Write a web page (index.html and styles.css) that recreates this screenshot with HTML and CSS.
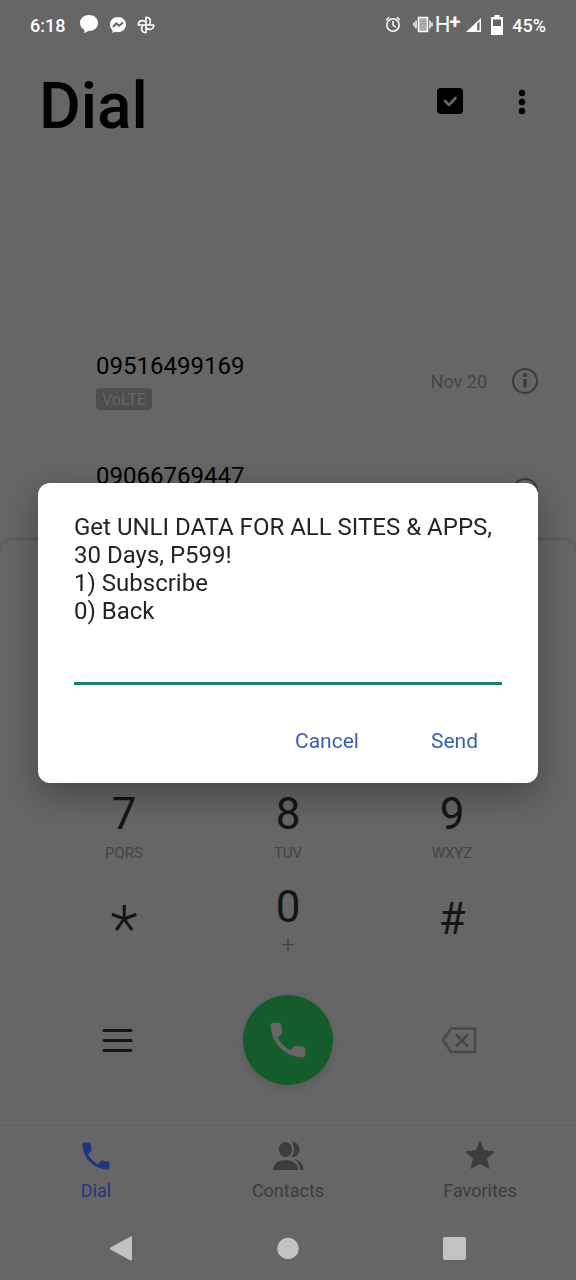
FILE: index.html
```html
<!DOCTYPE html>
<html lang="en">
<head>
<meta charset="utf-8">
<meta name="viewport" content="width=device-width, initial-scale=1">
<title>Dial</title>
<link rel="stylesheet" href="styles.css">
</head>
<body>
<div class="phone">
  <div class="status">
    <div class="status-left">
      <span class="status-text">6:18</span>
      <svg width="20" height="20" viewBox="0 0 20 20" fill="currentColor"><path d="M10 0C4.800 0 1 3.500 1 8c0 3 1.800 5.600 4.600 7L5 18.200 9.400 16H10c5.200 0 9-3.500 9-8s-3.800-8-9-8z"/></svg>
      <svg width="18" height="18" viewBox="0 0 18 18"><path fill="currentColor" d="M9 1C4.300 1 1 4.300 1 8.600c0 2.400.9 4.300 2.500 5.700V17l2.600-1.200c.9.300 1.900.4 2.900.4 4.700 0 8-3.300 8-7.600S13.700 1 9 1z"/><path d="M4 11l3.200-3.600 3 2.400L14 6.600" fill="none" stroke="#666" stroke-width="2"/></svg>
      <svg width="18" height="18" viewBox="0 0 18 18" fill="none" stroke="currentColor" stroke-width="1.600" stroke-linejoin="round"><path d="M9 9V1.200c3 .2 4.400 2 4.400 4 0 1.400-.5 2.500-1.400 3.800zM9 9h7.800c-.2 3-2 4.400-4 4.400-1.400 0-2.500-.5-3.800-1.400zM9 9v7.800c-3-.2-4.400-2-4.400-4 0-1.400.5-2.500 1.400-3.800zM9 9H1.200c.2-3 2-4.400 4-4.400 1.400 0 2.500.5 3.800 1.400z"/></svg>
    </div>
    <div class="status-right">
      <svg class="alarm" width="16" height="18" viewBox="0 0 16 18" fill="none" stroke="currentColor" stroke-width="1.500"><circle cx="8" cy="9" r="6.200"/><path d="M8 5v4l2.600 2.200M1 4l3.200-2.700M15 4l-3.200-2.700"/></svg>
      <svg width="20" height="18" viewBox="0 0 20 18"><rect x="5.500" y="1.500" width="9" height="14" fill="#aaa" stroke="currentColor" stroke-width="1.500"/><path d="M3 4.500v8M1 6.500v4M17 4.500v8M19 6.500v4" stroke="currentColor" stroke-width="1.400"/></svg>
      <span class="network">H<b>+</b></span>
      <svg width="16" height="16" viewBox="0 0 16 16"><path d="M0 15L15 1v14z" fill="currentColor"/><path d="M11.200 6.500L13.500 4.500v9h-2.300z" fill="#666"/></svg>
      <svg width="14" height="20" viewBox="0 0 14 20"><path fill="currentColor" d="M4.500 0h5v2H13v18H1V2h3.500z"/><path d="M3 4.500h8V11H3z" fill="#666"/></svg>
      <span class="status-text">45%</span>
    </div>
  </div>

  <header class="header">
    <h1 class="title">Dial</h1>
    <button class="icon-button" type="button" aria-label="Select calls"><svg width="28" height="28" viewBox="0 0 28 28"><rect x="1" y="0" width="26" height="26" rx="4"/><path d="M9 13l4 4 6.500-7" fill="none" stroke="#666" stroke-width="2.600" stroke-linecap="round" stroke-linejoin="round"/></svg></button>
    <button class="icon-button" type="button" aria-label="More options"><svg width="28" height="28" viewBox="0 0 28 28"><circle cx="14" cy="5" r="3.200"/><circle cx="14" cy="14" r="3.200"/><circle cx="14" cy="23" r="3.200"/></svg></button>
  </header>

  <main class="calls">
    <div class="call">
      <div class="call-main"><span class="number">09516499169</span><span class="tag">VoLTE</span></div>
      <span class="date">Nov 20</span>
      <button class="icon-button info" type="button" aria-label="Call details"><svg width="28" height="28" viewBox="0 0 28 28"><circle cx="14" cy="14" r="12" fill="none" stroke="currentColor" stroke-width="2"/><circle cx="14" cy="8" r="2" fill="currentColor"/><path d="M12.200 12h3.600v8.500h-3.600z" fill="currentColor"/></svg></button>
    </div>
    <div class="call">
      <div class="call-main"><span class="number">09066769447</span></div>
      <button class="icon-button info" type="button" aria-label="Call details"><svg width="28" height="28" viewBox="0 0 28 28"><circle cx="14" cy="14" r="12" fill="none" stroke="currentColor" stroke-width="2"/></svg></button>
    </div>
  </main>

  <section class="sheet" aria-label="Keypad">
    <div class="keypad">
      <button class="key" type="button"><span class="digit">7</span><span class="letters">PQRS</span></button>
      <button class="key" type="button"><span class="digit">8</span><span class="letters">TUV</span></button>
      <button class="key" type="button"><span class="digit">9</span><span class="letters">WXYZ</span></button>
      <button class="key symbol" type="button"><span class="star">*</span></button>
      <button class="key" type="button"><span class="digit">0</span><span class="plus">+</span></button>
      <button class="key symbol" type="button"><span class="digit">#</span></button>
    </div>
    <div class="actions">
      <button class="icon-button" type="button" aria-label="Menu"><svg width="32" height="32" viewBox="0 0 32 32" stroke="#151515" stroke-width="3" stroke-linecap="round"><path d="M3 6.500h27M3 16.500h27M3 26.500h27"/></svg></button>
      <button class="call-button" type="button" aria-label="Call"><svg width="46" height="46" viewBox="0 0 24 24" fill="currentColor"><path d="M6.620 10.790c1.440 2.830 3.760 5.140 6.590 6.590l2.200-2.200c.27-.27.670-.36 1.020-.24 1.120.37 2.330.57 3.570.57.550 0 1 .45 1 1V20c0 .55-.45 1-1 1-9.390 0-17-7.610-17-17 0-.55.450-1 1-1h3.500c.55 0 1 .45 1 1 0 1.250.2 2.450.57 3.570.11.350.03.740-.25 1.020z"/></svg></button>
      <button class="icon-button" type="button" aria-label="Delete"><svg width="36" height="28" viewBox="0 0 36 28" fill="none" stroke="#484848" stroke-width="2.500"><path d="M10 2.500h24v23.500H10L2 14z"/><path d="M15 8.500l12 12M27 8.500l-12 12"/></svg></button>
    </div>
  </section>

  <nav class="tabs">
    <a class="tab active" href="#dial"><svg width="36" height="36" viewBox="0 0 24 24" fill="currentColor"><path d="M6.620 10.790c1.440 2.830 3.760 5.140 6.590 6.590l2.200-2.200c.27-.27.670-.36 1.020-.24 1.120.37 2.330.57 3.570.57.550 0 1 .45 1 1V20c0 .55-.45 1-1 1-9.390 0-17-7.610-17-17 0-.55.450-1 1-1h3.500c.55 0 1 .45 1 1 0 1.250.2 2.450.57 3.570.11.350.03.740-.25 1.020z"/></svg>Dial</a>
    <a class="tab" href="#contacts"><svg width="36" height="36" viewBox="0 0 36 36" fill="currentColor"><ellipse cx="15.500" cy="11.500" rx="6.500" ry="7.500"/><path d="M3 32c0-6 5-10 12.500-10S28 26 28 32z"/><path d="M21.500 4.200c4.500-.8 8 2.800 8 7.300s-3.500 8-8 7.300c3.600-4 3.600-10.600 0-14.600zM24 21c5.500 1 9.500 5 9.500 11H30c0-5-2-8.500-6-11z"/></svg>Contacts</a>
    <a class="tab" href="#favorites"><svg width="36" height="36" viewBox="0 0 36 36" fill="currentColor" stroke="currentColor" stroke-width="1" stroke-linejoin="round"><path d="M18 3.500l4 9.200 10 1-7.500 6.800 2.200 9.900L18 25.300l-8.700 5.100 2.200-9.900L4 13.700l10-1z"/></svg>Favorites</a>
  </nav>

  <div class="system-nav">
    <button class="icon-button" type="button" aria-label="Back"><svg width="26" height="26" viewBox="0 0 26 26" fill="currentColor" stroke="currentColor" stroke-width="2" stroke-linejoin="round"><path d="M3 12.500L23 1.500v22z"/></svg></button>
    <button class="icon-button" type="button" aria-label="Home"><svg width="26" height="26" viewBox="0 0 26 26" fill="currentColor"><circle cx="13" cy="12.500" r="10.700"/></svg></button>
    <button class="icon-button" type="button" aria-label="Recent apps"><svg width="26" height="26" viewBox="0 0 26 26" fill="currentColor"><rect x="1" y="1" width="23" height="23" rx="2"/></svg></button>
  </div>
</div>

<div class="overlay">
  <form class="dialog" role="dialog" aria-labelledby="message">
    <label class="message" id="message" for="reply">Get UNLI DATA FOR ALL SITES &amp; APPS, 30 Days, P599!<br>1) Subscribe<br>0) Back</label>
    <input class="reply" id="reply" type="text" autocomplete="off">
    <div class="dialog-actions">
      <button class="text-button" type="button">Cancel</button>
      <button class="text-button" type="button">Send</button>
    </div>
  </form>
</div>
</body>
</html>
```
FILE: styles.css
```css
* { box-sizing: border-box; }
body {
  margin: 0;
  background: #666;
  color: #000;
  font-family: Roboto, "Noto Sans", sans-serif;
}
svg { display: block; flex: none; }
button {
  border: 0;
  padding: 0;
  background: none;
  color: inherit;
  font: inherit;
}
.phone {
  min-height: 100vh;
  display: flex;
  flex-direction: column;
}

.status {
  display: flex;
  justify-content: space-between;
  align-items: center;
  height: 50px;
  padding: 0 30px;
  color: #fff;
}
.status-left, .status-right { display: flex; align-items: center; }
.status-left { gap: 10px; }
.status-left .status-text { margin-right: 4px; }
.status-right { gap: 8px; }
.status-text { font-size: 18px; font-weight: 500; }
.alarm { margin-right: 4px; }
.network { display: flex; margin-left: -6px; margin-right: -2px; font-size: 22px; line-height: 24px; }
.network b { margin-left: -1px; font-size: 20px; line-height: 18px; }

.header {
  display: flex;
  align-items: center;
  gap: 44px;
  height: 104px;
  padding: 0 40px 0 39px;
}
.title {
  flex: 1;
  margin: 0;
  padding-top: 10px;
  font-size: 64px;
  line-height: 96px;
  font-weight: 500;
}
.icon-button { display: grid; place-items: center; }

.calls {
  flex: 1 1 0;
  min-height: 0;
  padding-top: 172px;
  overflow: hidden;
}
.call {
  display: flex;
  align-items: center;
  gap: 24px;
  height: 110px;
  padding: 0 37px 0 96px;
}
.call-main {
  flex: 1;
  display: flex;
  flex-direction: column;
  align-items: flex-start;
  align-self: flex-start;
  gap: 8px;
  padding-top: 26px;
}
.number { font-size: 24px; line-height: 28px; }
.tag {
  padding: 1px 6px 0;
  border-radius: 4px;
  background: #4d4d4d;
  color: #666;
  font-size: 16px;
  line-height: 21px;
}
.date { color: #454545; font-size: 18px; }
.info { color: #3c3c3c; }

.sheet {
  padding-top: 240px;
  border-radius: 12px 12px 0 0;
  background: #666;
  box-shadow: 0 -2px 3px #5a5a5a;
}
.keypad {
  display: grid;
  grid-template-columns: repeat(3, 1fr);
  padding: 0 42px;
}
.key {
  display: flex;
  flex-direction: column;
  align-items: center;
  height: 93px;
  padding-top: 8px;
  color: #151515;
}
.digit { font-size: 44px; line-height: 52px; }
.letters { margin-top: 3px; color: #444; font-size: 15px; line-height: 20px; }
.plus { color: #444; font-size: 24px; line-height: 24px; font-weight: 300; }
.symbol { padding-top: 20px; }
.star { font-size: 64px; line-height: 74px; font-weight: 300; }
.actions {
  display: grid;
  grid-template-columns: repeat(3, 1fr);
  place-items: center;
  height: 159px;
  padding: 0 32px 12px;
}
.call-button {
  display: grid;
  place-items: center;
  width: 90px;
  height: 90px;
  border-radius: 50%;
  background: #155c2c;
  color: #666;
  box-shadow: 0 4px 10px #5b5b5b;
}

.tabs {
  display: grid;
  grid-template-columns: repeat(3, 1fr);
  height: 92px;
  padding-top: 12px;
  border-top: 1px solid #5e5e5e;
}
.tab {
  display: flex;
  flex-direction: column;
  align-items: center;
  gap: 6px;
  color: #3c3c3c;
  font-size: 18px;
  line-height: 22px;
  text-decoration: none;
}
.active { color: #21357f; }

.system-nav {
  display: grid;
  grid-template-columns: repeat(3, 1fr);
  height: 63px;
  padding: 0 38px;
  color: #c2c2c2;
}

.overlay {
  position: fixed;
  inset: 0;
  display: grid;
  align-items: center;
  padding: 0 38px 14px;
}
.dialog {
  padding: 30px 36px 12px;
  border-radius: 12px;
  background: #fff;
  box-shadow: 0 12px 36px rgba(0, 0, 0, .32);
}
.message {
  display: block;
  color: #242424;
  font-size: 24px;
  line-height: 28px;
}
.reply {
  display: block;
  width: 100%;
  height: 60px;
  border: 0;
  border-bottom: 3px solid #1f7f77;
  outline: 0;
  background: none;
  font: inherit;
  font-size: 24px;
}
.dialog-actions {
  display: flex;
  justify-content: flex-end;
  gap: 24px;
  margin-top: 26px;
}
.text-button {
  height: 60px;
  padding: 0 24px;
  color: #3a5fae;
  font-size: 21px;
}
```
